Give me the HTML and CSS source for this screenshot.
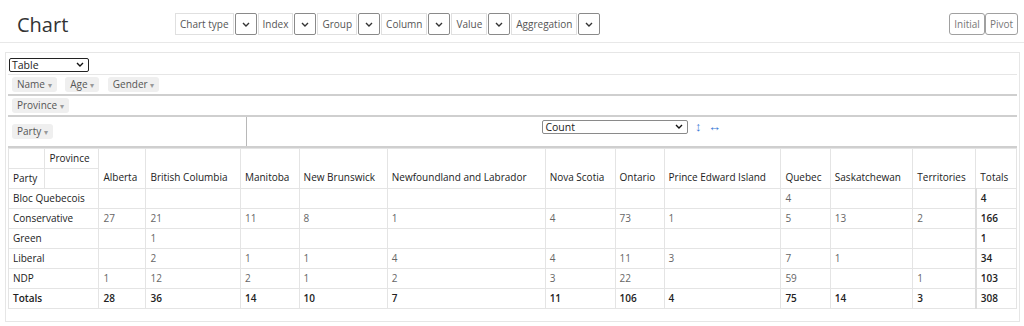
FILE: index.html
```html
<!DOCTYPE html>
<html lang="en">
  <head>
    <meta charset="UTF-8" />
    <meta name="viewport" content="width=device-width, initial-scale=1.0" />
    <title>Chart</title>
    <link rel="stylesheet" href="styles.css">
  </head>
  <body>
    <header class="topbar">
      <h1 class="title">Chart</h1>

      <div class="toolbar">
        <span class="tool-label">Chart type</span>
        <span class="tool-select"><svg width="8" height="5" viewBox="0 0 8 5"><path d="M1 1l3 3 3-3" fill="none" stroke="#333" stroke-width="1.4"/></svg></span>
        <span class="tool-label">Index</span>
        <span class="tool-select"><svg width="8" height="5" viewBox="0 0 8 5"><path d="M1 1l3 3 3-3" fill="none" stroke="#333" stroke-width="1.4"/></svg></span>
        <span class="tool-label">Group</span>
        <span class="tool-select"><svg width="8" height="5" viewBox="0 0 8 5"><path d="M1 1l3 3 3-3" fill="none" stroke="#333" stroke-width="1.4"/></svg></span>
        <span class="tool-label">Column</span>
        <span class="tool-select"><svg width="8" height="5" viewBox="0 0 8 5"><path d="M1 1l3 3 3-3" fill="none" stroke="#333" stroke-width="1.4"/></svg></span>
        <span class="tool-label">Value</span>
        <span class="tool-select"><svg width="8" height="5" viewBox="0 0 8 5"><path d="M1 1l3 3 3-3" fill="none" stroke="#333" stroke-width="1.4"/></svg></span>
        <span class="tool-label">Aggregation</span>
        <span class="tool-select"><svg width="8" height="5" viewBox="0 0 8 5"><path d="M1 1l3 3 3-3" fill="none" stroke="#333" stroke-width="1.4"/></svg></span>
      </div>

      <div class="modes">
        <button class="mode">Initial</button>
        <button class="mode">Pivot</button>
      </div>
    </header>

    <div class="panel">
      <table class="pvt-ui">
        <tr>
          <td class="cell-renderer" colspan="2">
            <span class="fake-select renderer">Table<svg width="8" height="5" viewBox="0 0 8 5"><path d="M1 1l3 3 3-3" fill="none" stroke="#111" stroke-width="1.4"/></svg></span>
          </td>
        </tr>
        <tr>
          <td class="axis axis-unused" colspan="2">
            <span class="chip">Name <i>▾</i></span>
            <span class="chip">Age <i>▾</i></span>
            <span class="chip">Gender <i>▾</i></span>
          </td>
        </tr>
        <tr>
          <td class="axis axis-cols" colspan="2">
            <span class="chip">Province <i>▾</i></span>
          </td>
        </tr>
        <tr>
          <td class="axis axis-rows">
            <span class="chip">Party <i>▾</i></span>
          </td>
          <td class="vals">
            <span class="fake-select aggregator">Count<svg width="8" height="5" viewBox="0 0 8 5"><path d="M1 1l3 3 3-3" fill="none" stroke="#111" stroke-width="1.4"/></svg></span>
            <a class="order">↕</a>
            <a class="order">↔</a>
          </td>
        </tr>
        <tr>
          <td class="output" colspan="2">
            <table class="pvt-table">
              <thead>
                <tr>
                  <th class="corner"></th>
                  <th class="axis-label">Province</th>
                  <th class="col-label" rowspan="2">Alberta</th>
                  <th class="col-label" rowspan="2">British Columbia</th>
                  <th class="col-label" rowspan="2">Manitoba</th>
                  <th class="col-label" rowspan="2">New Brunswick</th>
                  <th class="col-label" rowspan="2">Newfoundland and Labrador</th>
                  <th class="col-label" rowspan="2">Nova Scotia</th>
                  <th class="col-label" rowspan="2">Ontario</th>
                  <th class="col-label" rowspan="2">Prince Edward Island</th>
                  <th class="col-label" rowspan="2">Quebec</th>
                  <th class="col-label" rowspan="2">Saskatchewan</th>
                  <th class="col-label" rowspan="2">Territories</th>
                  <th class="col-label total-col" rowspan="2">Totals</th>
                </tr>
                <tr>
                  <th class="axis-label">Party</th>
                  <th class="corner"></th>
                </tr>
              </thead>
              <tbody>
                <tr>
                  <th class="row-label" colspan="2">Bloc Quebecois</th>
                  <td></td><td></td><td></td><td></td><td></td><td></td><td></td><td></td>
                  <td>4</td><td></td><td></td>
                  <td class="total">4</td>
                </tr>
                <tr>
                  <th class="row-label" colspan="2">Conservative</th>
                  <td>27</td><td>21</td><td>11</td><td>8</td><td>1</td><td>4</td><td>73</td><td>1</td>
                  <td>5</td><td>13</td><td>2</td>
                  <td class="total">166</td>
                </tr>
                <tr>
                  <th class="row-label" colspan="2">Green</th>
                  <td></td><td>1</td><td></td><td></td><td></td><td></td><td></td><td></td>
                  <td></td><td></td><td></td>
                  <td class="total">1</td>
                </tr>
                <tr>
                  <th class="row-label" colspan="2">Liberal</th>
                  <td></td><td>2</td><td>1</td><td>1</td><td>4</td><td>4</td><td>11</td><td>3</td>
                  <td>7</td><td>1</td><td></td>
                  <td class="total">34</td>
                </tr>
                <tr>
                  <th class="row-label" colspan="2">NDP</th>
                  <td>1</td><td>12</td><td>2</td><td>1</td><td>2</td><td>3</td><td>22</td><td></td>
                  <td>59</td><td></td><td>1</td>
                  <td class="total">103</td>
                </tr>
                <tr class="totals">
                  <th class="row-label" colspan="2">Totals</th>
                  <td>28</td><td>36</td><td>14</td><td>10</td><td>7</td><td>11</td><td>106</td><td>4</td>
                  <td>75</td><td>14</td><td>3</td>
                  <td class="total">308</td>
                </tr>
              </tbody>
            </table>
          </td>
        </tr>
      </table>
    </div>
  </body>
</html>
```

FILE: styles.css
```css
* {
  box-sizing: border-box;
}

body {
  margin: 0;
  font-family: "Open Sans", "Noto Sans", sans-serif;
  font-size: 10px;
  color: #333;
  background: #fff;
}

.topbar {
  display: flex;
  align-items: center;
  height: 43px;
  padding: 6px 6px 0 17px;
  border-bottom: 1px solid #e8e8e8;
}

.title {
  width: 158px;
  margin: 0;
  font-size: 20px;
  font-weight: 400;
  color: #333;
}

.toolbar {
  display: flex;
  gap: 1px;
  height: 22px;
}

.tool-label {
  display: flex;
  align-items: center;
  padding: 0 4px;
  border: 1px solid #e0e0e0;
  color: #555;
}

.tool-select {
  display: flex;
  align-items: center;
  justify-content: center;
  width: 22px;
  border: 1px solid #8a8a8a;
  border-radius: 2px;
}

.modes {
  display: flex;
  margin-left: auto;
}

.mode {
  height: 22px;
  padding: 0 4px;
  font: inherit;
  color: #777;
  background: #fff;
  border: 1px solid #a0a0a0;
  border-radius: 3px;
}

.panel {
  margin: 9px 4px 0 5px;
  padding: 0 2px 12px 2px;
  border: 1px solid #e6e6e6;
}

.pvt-ui {
  width: 100%;
  border-collapse: collapse;
}

.pvt-ui > tbody > tr > td {
  padding: 0;
}

.cell-renderer {
  height: 21px;
  padding: 3px 0 0 1px !important;
  border-bottom: 1px solid #e6e6e6;
}

.fake-select {
  display: inline-flex;
  align-items: center;
  justify-content: space-between;
  height: 14px;
  padding: 0 4px 0 2px;
  border-radius: 2px;
  color: #222;
  line-height: 1;
  font-size: 10.5px;
}

.renderer {
  width: 80px;
  border: 1px solid #222;
}

.aggregator {
  width: 146px;
  border: 1px solid #8a8a8a;
}

.axis {
  padding: 2px 4px !important;
  border-bottom: 2px solid #cfcfcf;
}

.axis-unused {
  height: 20px;
}

.axis-cols {
  height: 19px;
}

.axis-rows {
  width: 238px;
  height: 31px;
  border-right: 1px solid #b8b8b8;
}

.chip {
  display: inline-block;
  margin-right: 6px;
  padding: 1px 5px;
  line-height: 13px;
  background: #efefef;
  border-radius: 3px;
  color: #555;
}

.chip i {
  font-style: normal;
  font-size: 8px;
  color: #999;
}

.vals {
  vertical-align: top;
  text-align: center;
  padding-top: 3px !important;
  border-bottom: 2px solid #cfcfcf;
}

.order {
  margin-left: 4px;
  color: #3a78d6;
  font-size: 13px;
  line-height: 13px;
}

.output {
  padding-top: 0;
}

.pvt-table {
  width: 100%;
  border-collapse: collapse;
}

.pvt-table th,
.pvt-table td {
  height: 20px;
  padding: 2px 4px;
  border: 1px solid #e4e4e4;
  text-align: left;
  white-space: nowrap;
}

.pvt-table th {
  font-weight: 400;
  color: #222;
}

.col-label {
  vertical-align: bottom;
  padding-bottom: 4px !important;
}

.pvt-table td {
  color: #666;
}

.pvt-table .total,
.totals td,
.totals th {
  color: #222;
  font-weight: 600;
}

.total-col,
.pvt-table .total {
  border-left: 2px solid #dcdcdc;
}
```
